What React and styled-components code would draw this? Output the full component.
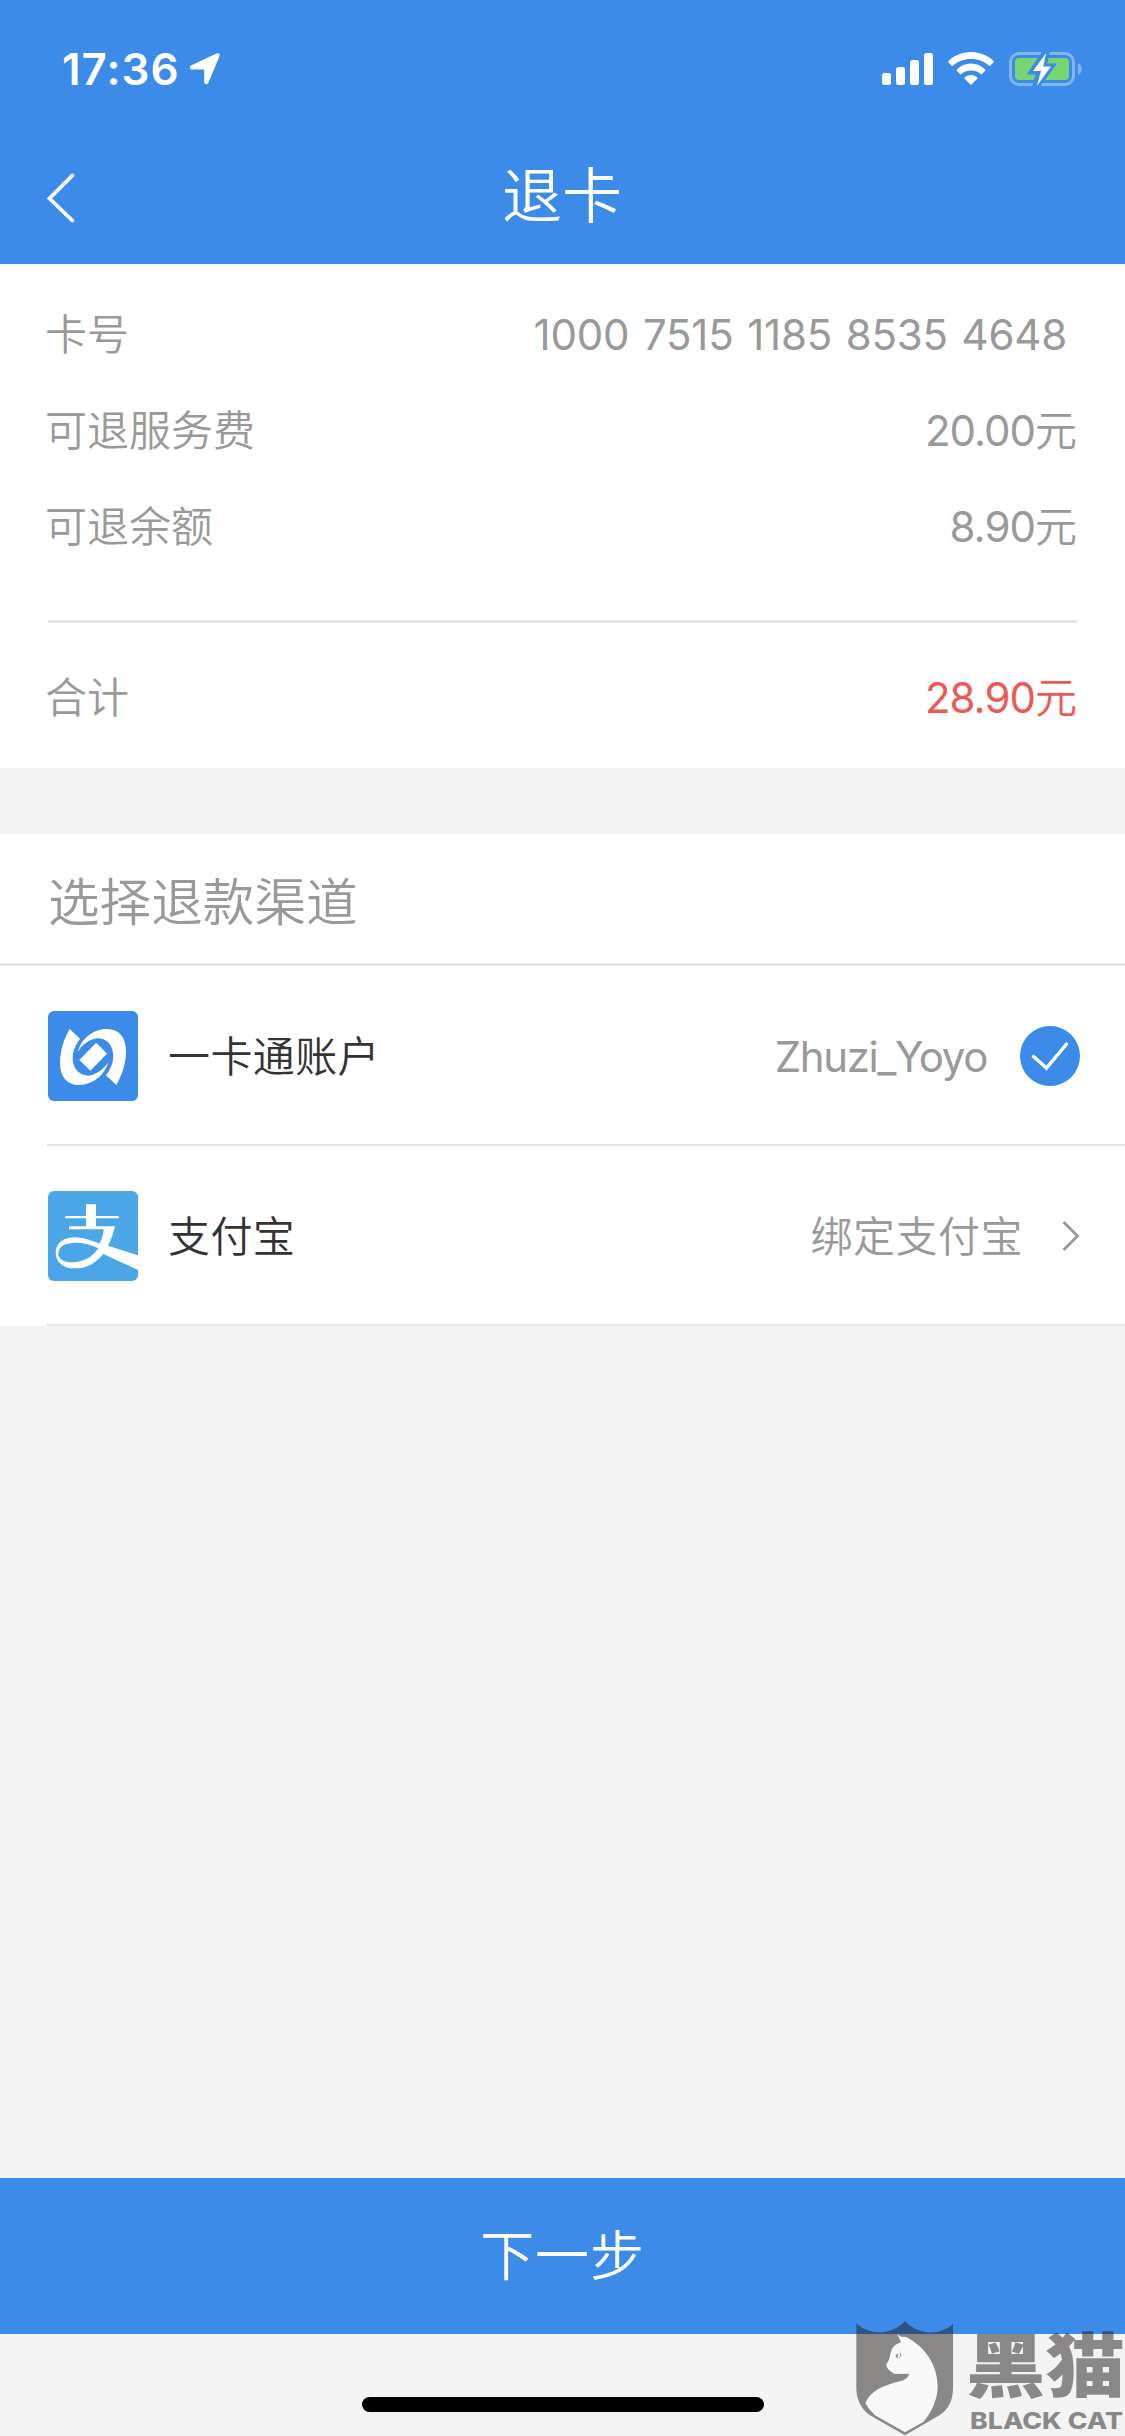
import React from 'react';
import styled, { createGlobalStyle } from 'styled-components';

const GlobalStyle = createGlobalStyle`
  * {
    box-sizing: border-box;
  }
  body {
    margin: 0;
    background: #f3f3f3;
    font-family: Inter, 'Noto Sans CJK SC', sans-serif;
    font-weight: 350;
  }
`;

const Page = styled.div`
  position: relative;
  display: flex;
  flex-direction: column;
  width: 1125px;
  height: 2436px;
  overflow: hidden;
  background: #f3f3f3;
`;

const Header = styled.header`
  height: 264px;
  background: #3d8be8;
  color: #fff;
`;

const StatusBar = styled.div`
  display: flex;
  align-items: center;
  justify-content: space-between;
  height: 138px;
  padding: 0 43px 0 62px;
`;

const Clock = styled.div`
  display: flex;
  align-items: center;
  gap: 10px;
  font-size: 44px;
  font-weight: 600;
  letter-spacing: 1px;
  line-height: 54px;
`;

const StatusIcons = styled.div`
  display: flex;
  align-items: center;
  gap: 15px;
`;

const TitleBar = styled.div`
  display: grid;
  grid-template-columns: 120px 1fr 120px;
  align-items: center;
  height: 120px;
  padding: 0 0 4px 45px;
`;

const Title = styled.h1`
  margin: 0;
  padding-right: 46px;
  text-align: center;
  font-size: 60px;
  font-weight: 350;
  line-height: 80px;
`;

const Summary = styled.section`
  height: 504px;
  padding: 22px 48px 0 45px;
  background: #fff;
`;

const InfoRow = styled.div`
  display: flex;
  align-items: center;
  justify-content: space-between;
  height: 96px;
  padding-top: 2px;
  color: #999;
  font-size: 42px;
  line-height: 60px;
`;

const TotalRow = styled(InfoRow)`
  height: 148px;
`;

const Value = styled.span`
  color: ${(props) => (props.$red ? '#ed5a54' : '#999')};
  font-weight: 400;
  letter-spacing: -1px;
`;

const CardNumber = styled(Value)`
  padding-right: 10px;
  letter-spacing: -0.2px;
  word-spacing: 2px;
`;

const Unit = styled.span`
  font-weight: 350;
  letter-spacing: 0;
`;

const Divider = styled.div`
  height: 3px;
  margin: 46px 0 0 3px;
  background: #e5e5e5;
`;

const Channels = styled.section`
  margin-top: 66px;
  background: #fff;
`;

const ChannelsTitle = styled.h2`
  height: 132px;
  margin: 0;
  padding-left: 48px;
  border-bottom: 3px solid #e5e5e5;
  color: #999;
  font-size: 51.6px;
  font-weight: 350;
  line-height: 136px;
`;

const Channel = styled.div`
  display: flex;
  align-items: center;
  height: 180px;
  margin-left: 47px;
  padding: 2px 45px 0 1px;
  border-bottom: 2px solid #e5e5e5;
  font-size: 42px;
  line-height: 60px;
`;

const ChannelName = styled.span`
  flex: 1;
  margin-left: 30px;
  padding-top: 2px;
  color: #333;
  letter-spacing: 0.4px;
`;

const Account = styled.span`
  margin-right: 33px;
  padding-top: 1px;
  color: #999;
  font-weight: 400;
  letter-spacing: -1.4px;
`;

const BindNote = styled.span`
  margin-right: 39px;
  padding-top: 2px;
  color: #999;
  letter-spacing: 0.5px;
`;

const NextButton = styled.button`
  height: 156px;
  margin-top: auto;
  padding: 2px 0 0;
  border: 0;
  background: #3d8be8;
  color: #fff;
  font-family: inherit;
  font-size: 54px;
  font-weight: 350;
  letter-spacing: 0.8px;
  line-height: 80px;
`;

const HomeArea = styled.div`
  display: flex;
  justify-content: center;
  height: 102px;
  padding-top: 63px;
`;

const HomeBar = styled.div`
  width: 402px;
  height: 15px;
  border-radius: 8px;
  background: #000;
`;

const Watermark = styled.svg`
  position: absolute;
  right: 0;
  bottom: 0;
`;

const LocationIcon = () => (
  <svg width="30" height="32" viewBox="0 0 30 32" fill="#fff">
    <path d="M27 .3C29 -.3 30 .8 29.6 2.8L18.5 29.5C17.5 32 14.2 31.6 14.2 29V16.5H2C-.4 16.5-.8 13.3 1.4 12.3Z" />
  </svg>
);

const SignalIcon = () => (
  <svg width="51" height="34" viewBox="0 0 51 34" fill="#fff">
    <rect x="0" y="21" width="9" height="12" rx="2.5" />
    <rect x="14" y="15" width="9" height="18" rx="2.5" />
    <rect x="28" y="8" width="9" height="25" rx="2.5" />
    <rect x="42" y="1" width="9" height="32" rx="2.5" />
  </svg>
);

const WifiIcon = () => (
  <svg width="46" height="34" viewBox="0 0 46 34" fill="#fff">
    <path d="M23 0C32 0 40 3.500 45.500 9C46 9.500 46 10 45.500 10.500L41.700 14.200C36.500 9.500 30 7 23 7S9.500 9.500 4.300 14.200L.5 10.500C0 10 0 9.500.5 9C6 3.500 14 0 23 0Z" />
    <path d="M23 11.500C28.500 11.500 33.500 13.700 37.200 17.400C37.600 17.900 37.600 18.300 37.200 18.700L33.300 22.500C30.500 20 27 18.500 23 18.500S15.500 20 12.700 22.500L8.800 18.700C8.400 18.300 8.400 17.900 8.800 17.400C12.500 13.700 17.500 11.500 23 11.500Z" />
    <path d="M23 23C25.500 23 27.700 24 29.300 25.500C29.700 26 29.700 26.400 29.300 26.800L23 33L16.700 26.800C16.300 26.400 16.300 26 16.700 25.500C18.300 24 20.500 23 23 23Z" />
  </svg>
);

const BatteryIcon = () => (
  <svg width="73" height="34" viewBox="0 0 73 34">
    <rect x="1.500" y="1.500" width="63" height="31" rx="8.500" fill="none" stroke="#80b5f1" strokeWidth="3" />
    <rect x="6" y="6" width="54" height="22" rx="4" fill="#77d672" />
    <path d="M69 11C74 14 74 20 69 23Z" fill="#80b5f1" />
    <path d="M33.500 -1L17.500 22.500H26.500L23 35H31L48 11.500H38.500L41 -1Z" fill="#3d8be8" />
    <path d="M37.200 1L24 19H32L27.800 34L42 14.500H34.200Z" fill="#fff" />
  </svg>
);

const BackIcon = styled(({ className }) => (
  <svg className={className} width="32" height="50" viewBox="0 0 32 50" fill="none" stroke="#fff" strokeWidth="3.800" strokeLinecap="round">
    <path d="M27.300 2.500L4.500 25.500L27.300 47.500" />
  </svg>
))`
  margin-top: 4px;
`;

const YikatongIcon = () => {
  const swirl =
    'M77 69L108 98C87 125 80 156 92 183C99 199 115 209 135 209C160 205 180 189 192 169C184 205 148 237 105 237C69 237 48 212 48 170C48 131 62 95 77 69Z';
  return (
    <svg width="90" height="90" viewBox="12 15 270 270">
      <rect x="12" y="15" width="270" height="270" rx="18" fill="#3d8be8" />
      <path d={swirl} fill="#fff" />
      <path d={swirl} fill="#fff" transform="rotate(180 147 153)" />
      <path d="M157 111L188 143L139 193L107 162Z" fill="#fff" stroke="#fff" strokeWidth="2" strokeLinejoin="round" />
    </svg>
  );
};

const AlipayIcon = () => (
  <svg width="90" height="90" viewBox="12 15 270 270">
    <rect x="12" y="15" width="270" height="270" rx="18" fill="#4ba6e8" />
    <path
      fill="#fff"
      fillRule="evenodd"
      d="M126 55H156V90H224V97H156V121H213C208 143 201 163 192 179L282 208V252L178 204C150 238 122 248 85 247C65 247 35 232 35 200C36 168 62 154 92 154C120 155 142 163 166 173C174 160 178 145 179 130H75V121H126V97H64V90H126ZM163 187C139 175 110 169 85 171C58 173 43 184 43 203C43 220 63 229 85 229C116 229 144 215 163 187Z"
    />
  </svg>
);

const CheckIcon = () => (
  <svg width="60" height="60" viewBox="0 0 60 60" fill="none">
    <circle cx="30" cy="30" r="30" fill="#3d8be8" />
    <path d="M13.500 30.500L26.500 42L46.500 18" stroke="#fff" strokeWidth="3.500" strokeLinecap="round" />
  </svg>
);

const ArrowIcon = () => (
  <svg width="18" height="30" viewBox="0 0 18 30" fill="none" stroke="#999" strokeWidth="2.800">
    <path d="M1.500 1L15.500 15L1.500 29" />
  </svg>
);

const BlackCat = () => (
  <Watermark width="275" height="150" viewBox="0 -30 275 150">
    <g transform="scale(.33333)">
      <path
        fill="rgba(34, 27, 28, .5)"
        d="M19 22C60 60 125 58 165 15C205 58 268 60 309 24V215C309 255 295 280 268 298L165 358L60 298C33 278 19 250 19 215Z"
      />
      <path
        fill="#f8f8f8"
        d="M142 54L153 62L168 63C230 95 262 150 263 210C263 250 245 290 220 318L165 349L75 298Q55 280 46 262C60 225 100 208 150 196C165 192 175 184 178 173L133 174C118 165 108 155 109 145C122 130 118 115 127 97C133 87 145 82 153 79Z"
      />
      <path fill="#8a8787" d="M137 118L145 111L142 123L145 128C139 126 137 123 137 118ZM149 109C155 113 154 122 148 127L151 118Z" />
    </g>
    <g fill="rgba(34, 27, 28, .5)">
      <text x="116" y="76" fontFamily="'Noto Sans CJK SC', sans-serif" fontWeight="900" fontSize="70" textLength="159" lengthAdjust="spacingAndGlyphs">
        黑猫
      </text>
      <text x="120" y="113" fontFamily="Inter, sans-serif" fontWeight="800" fontSize="23" textLength="153" lengthAdjust="spacingAndGlyphs">
        BLACK CAT
      </text>
    </g>
  </Watermark>
);

const App = () => {
  return (
    <Page>
      <GlobalStyle />
      <Header>
        <StatusBar>
          <Clock>
            17:36
            <LocationIcon />
          </Clock>
          <StatusIcons>
            <SignalIcon />
            <WifiIcon />
            <BatteryIcon />
          </StatusIcons>
        </StatusBar>
        <TitleBar>
          <BackIcon />
          <Title>退卡</Title>
        </TitleBar>
      </Header>

      <Summary>
        <InfoRow>
          <span>卡号</span>
          <CardNumber>1000 7515 1185 8535 4648</CardNumber>
        </InfoRow>
        <InfoRow>
          <span>可退服务费</span>
          <Value>20.00<Unit>元</Unit></Value>
        </InfoRow>
        <InfoRow>
          <span>可退余额</span>
          <Value>8.90<Unit>元</Unit></Value>
        </InfoRow>
        <Divider />
        <TotalRow>
          <span>合计</span>
          <Value $red>28.90<Unit>元</Unit></Value>
        </TotalRow>
      </Summary>

      <Channels>
        <ChannelsTitle>选择退款渠道</ChannelsTitle>
        <Channel>
          <YikatongIcon />
          <ChannelName>一卡通账户</ChannelName>
          <Account>Zhuzi_Yoyo</Account>
          <CheckIcon />
        </Channel>
        <Channel>
          <AlipayIcon />
          <ChannelName>支付宝</ChannelName>
          <BindNote>绑定支付宝</BindNote>
          <ArrowIcon />
        </Channel>
      </Channels>

      <NextButton>下一步</NextButton>
      <HomeArea>
        <HomeBar />
      </HomeArea>
      <BlackCat />
    </Page>
  );
};

export default App;
